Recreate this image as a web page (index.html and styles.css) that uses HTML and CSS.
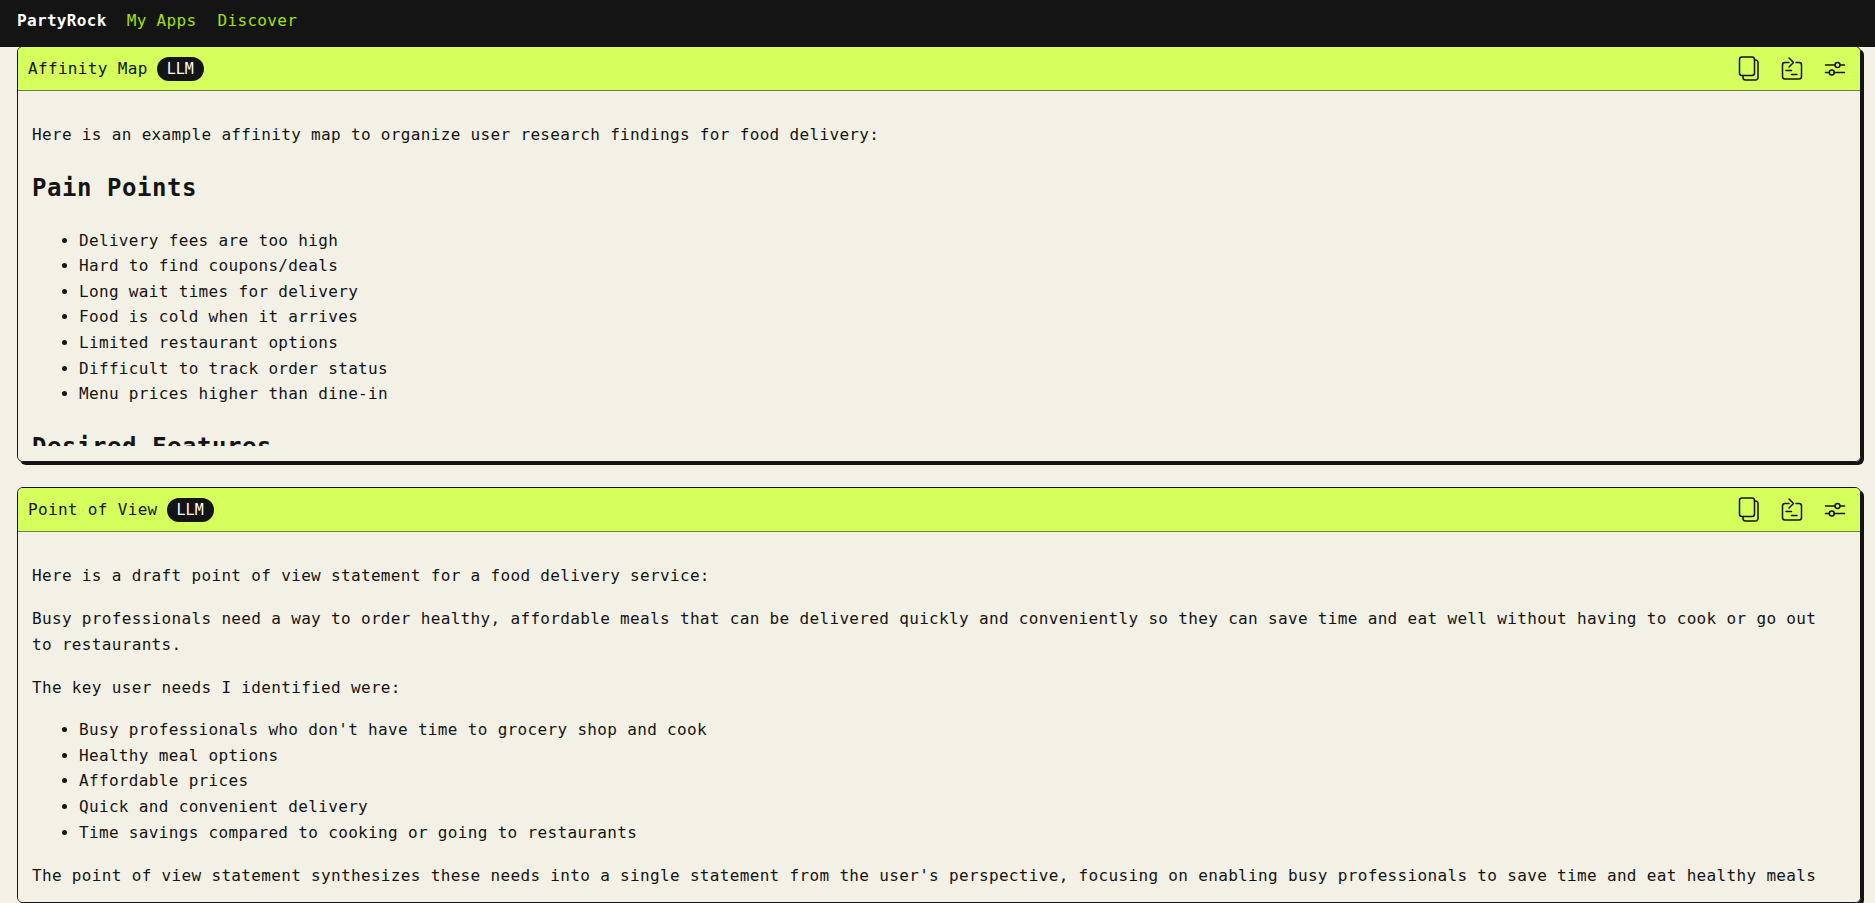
FILE: index.html
```html
<!DOCTYPE html>
<html lang="en">
<head>
    <meta charset="UTF-8">
    <meta name="viewport" content="width=device-width, initial-scale=1.0">
    <title>PartyRock</title>
    <link rel="stylesheet" href="styles.css">
</head>
<body>
    <nav class="topnav">
        <a class="brand">PartyRock</a>
        <a class="nav-link">My Apps</a>
        <a class="nav-link">Discover</a>
    </nav>

    <main class="widgets">
        <section class="card">
            <header class="card-head">
                <h3 class="card-title">Affinity Map</h3>
                <span class="badge">LLM</span>
                <div class="card-actions">
                    <button class="icon-btn" aria-label="Copy">
                        <svg viewBox="0 0 24 28" width="24" height="28"><rect x="2.500" y="2" width="15" height="18.500" rx="2.500"/><path d="M17.500 5h1a2.500 2.500 0 0 1 2.500 2.500v15a2.500 2.500 0 0 1-2.500 2.500h-10a2.500 2.500 0 0 1-2.500-2.500v-2"/></svg>
                    </button>
                    <button class="icon-btn" aria-label="Share">
                        <svg viewBox="0 0 24 28" width="24" height="28"><path d="M9 7.500H5A2.500 2.500 0 0 0 2.500 10v11.500A2.500 2.500 0 0 0 5 24h14a2.500 2.500 0 0 0 2.500-2.500V10A2.500 2.500 0 0 0 19 7.500h-3"/><path d="M9 3l4.500 4.500L9 12"/><path d="M6 15.500h5.500M11.500 19.500h5.500"/></svg>
                    </button>
                    <button class="icon-btn" aria-label="Settings">
                        <svg viewBox="0 0 24 28" width="24" height="28"><path d="M2.500 10h10M17 10h4.500M2.500 17.500h4M11 17.500h10.500"/><circle cx="14.500" cy="10" r="2.500"/><circle cx="8.800" cy="17.500" r="2.500"/></svg>
                    </button>
                </div>
            </header>
            <div class="card-body">
                <div class="card-scroll">
                    <p>Here is an example affinity map to organize user research findings for food delivery:</p>
                    <h2>Pain Points</h2>
                    <ul>
                        <li>Delivery fees are too high</li>
                        <li>Hard to find coupons/deals</li>
                        <li>Long wait times for delivery</li>
                        <li>Food is cold when it arrives</li>
                        <li>Limited restaurant options</li>
                        <li>Difficult to track order status</li>
                        <li>Menu prices higher than dine-in</li>
                    </ul>
                    <h2>Desired Features</h2>
                </div>
            </div>
        </section>

        <section class="card">
            <header class="card-head">
                <h3 class="card-title">Point of View</h3>
                <span class="badge">LLM</span>
                <div class="card-actions">
                    <button class="icon-btn" aria-label="Copy">
                        <svg viewBox="0 0 24 28" width="24" height="28"><rect x="2.500" y="2" width="15" height="18.500" rx="2.500"/><path d="M17.500 5h1a2.500 2.500 0 0 1 2.500 2.500v15a2.500 2.500 0 0 1-2.500 2.500h-10a2.500 2.500 0 0 1-2.500-2.500v-2"/></svg>
                    </button>
                    <button class="icon-btn" aria-label="Share">
                        <svg viewBox="0 0 24 28" width="24" height="28"><path d="M9 7.500H5A2.500 2.500 0 0 0 2.500 10v11.500A2.500 2.500 0 0 0 5 24h14a2.500 2.500 0 0 0 2.500-2.500V10A2.500 2.500 0 0 0 19 7.500h-3"/><path d="M9 3l4.500 4.500L9 12"/><path d="M6 15.500h5.500M11.500 19.500h5.500"/></svg>
                    </button>
                    <button class="icon-btn" aria-label="Settings">
                        <svg viewBox="0 0 24 28" width="24" height="28"><path d="M2.500 10h10M17 10h4.500M2.500 17.500h4M11 17.500h10.500"/><circle cx="14.500" cy="10" r="2.500"/><circle cx="8.800" cy="17.500" r="2.500"/></svg>
                    </button>
                </div>
            </header>
            <div class="card-body">
                <div class="card-scroll">
                    <p>Here is a draft point of view statement for a food delivery service:</p>
                    <p>Busy professionals need a way to order healthy, affordable meals that can be delivered quickly and conveniently so they can save time and eat well without having to cook or go out to restaurants.</p>
                    <p>The key user needs I identified were:</p>
                    <ul>
                        <li>Busy professionals who don't have time to grocery shop and cook</li>
                        <li>Healthy meal options</li>
                        <li>Affordable prices</li>
                        <li>Quick and convenient delivery</li>
                        <li>Time savings compared to cooking or going to restaurants</li>
                    </ul>
                    <p>The point of view statement synthesizes these needs into a single statement from the user's perspective, focusing on enabling busy professionals to save time and eat healthy meals</p>
                </div>
            </div>
        </section>
    </main>
</body>
</html>
```

FILE: styles.css
```css
* {
    box-sizing: border-box;
}
html, body {
    height: 100%;
}
body {
    margin: 0;
    overflow: hidden;
    background-color: #f3f0e6;
    color: #141414;
    font-family: "DejaVu Sans Mono", monospace;
    font-size: 16px;
    letter-spacing: 0.335px;
}
.topnav {
    position: relative;
    z-index: 2;
    display: flex;
    align-items: center;
    height: 47px;
    padding: 0 17px 6px;
    background-color: #141414;
}
.brand {
    margin-right: 20px;
    color: #fff;
    font-weight: 700;
}
.nav-link {
    margin-right: 21px;
    color: #a6e000;
}
.widgets {
    display: flex;
    flex-direction: column;
    gap: 25px;
    margin-top: -1px;
    padding: 0 14px 0 17px;
}
.card {
    height: 416px;
    display: flex;
    flex-direction: column;
    flex-shrink: 0;
    border: 1px solid #141414;
    border-radius: 6px;
    box-shadow: 3px 3px 0 #141414;
    overflow: hidden;
}
.card-head {
    display: flex;
    align-items: center;
    gap: 9px;
    height: 44px;
    padding: 0 13px 0 10px;
    background-color: #d4ff5c;
    border-bottom: 1px solid #6f7f3c;
}
.card-title {
    margin: 0;
    font-size: 16px;
    font-weight: 400;
}
.badge {
    padding: 0 10px;
    height: 24px;
    line-height: 24px;
    border-radius: 12px;
    background-color: #141414;
    color: #fff;
    font-size: 15px;
    letter-spacing: 0;
}
.card-actions {
    display: flex;
    gap: 19px;
    margin-left: auto;
}
.icon-btn {
    padding: 0;
    border: none;
    background: none;
    display: flex;
}
.icon-btn svg {
    fill: none;
    stroke: #141414;
    stroke-width: 1.5;
    stroke-linecap: round;
    stroke-linejoin: round;
}
.card-body {
    flex: 1;
    min-height: 0;
    padding: 0 14px 15px;
    background-color: #f3f0e6;
}
.card-scroll {
    height: 100%;
    overflow: hidden;
    padding-top: 31px;
    line-height: 1.6;
}
.card-scroll p {
    margin: 0 0 17.6px;
}
.card-scroll h2 {
    margin: 24px 0 25px;
    font-size: 24px;
    line-height: 32px;
    letter-spacing: 0.55px;
    font-weight: 700;
}
.card-scroll ul {
    margin: -1px 0 18px;
    padding-left: 47px;
}
```
